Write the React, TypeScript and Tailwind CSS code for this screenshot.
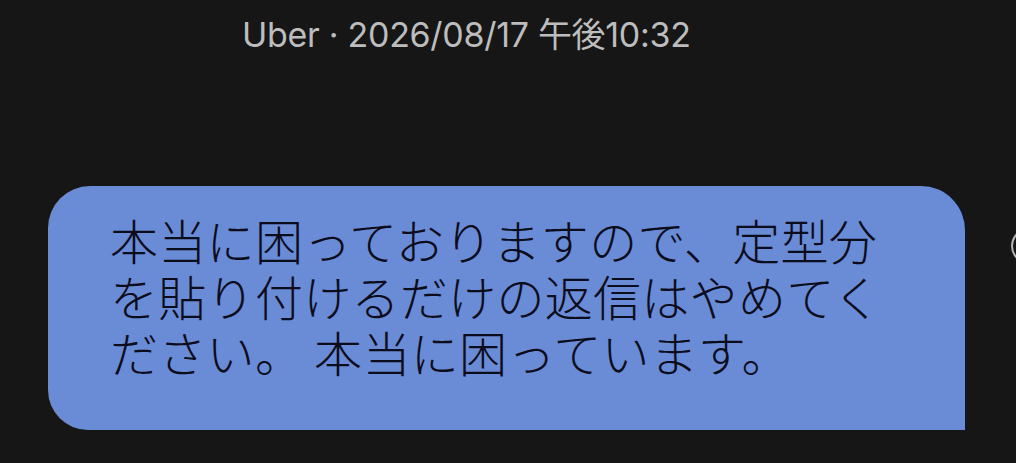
export default function App() {
  return (
    <div className="relative w-[1016px] h-[463px] overflow-hidden bg-[#161616] font-['Inter','Noto_Sans_CJK_JP',sans-serif]">
      {/* timestamp header */}
      <div className="pl-[242px] pt-[12px] text-[34px] leading-[46px] text-[#bdbdbd] tracking-[-0.3px]">
        Uber · 2026/08/17 午後10:32
      </div>

      {/* message bubble */}
      <div className="mt-[128px] ml-[48px] w-[917px] h-[244px] bg-[#6a8bd6] rounded-tl-[42px] rounded-tr-[44px] rounded-bl-[40px] pl-[62px] pt-[25px]">
        <p className="w-[780px] text-[48px] leading-[56px] font-light text-[#0b0d1c] tracking-[0.3px] font-['Noto_Sans_CJK_JP',sans-serif]">
          本当に困っておりますので、定型分を貼り付けるだけの返信はやめてください。 本当に困っています。
        </p>
      </div>

      {/* edge of next element, cut off by the screen */}
      <div className="absolute left-[1011px] top-[228px] w-[40px] h-[36px] rounded-full border-2 border-[#b5b5b5]" />
    </div>
  );
}
